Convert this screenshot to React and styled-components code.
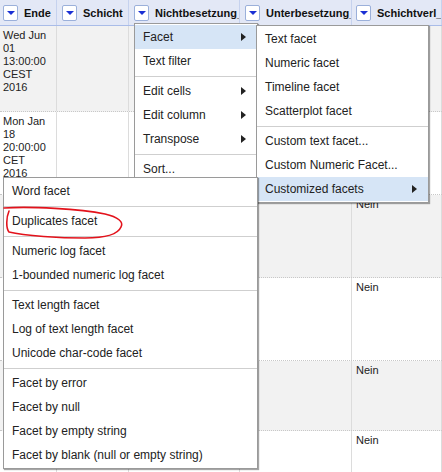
import styled, { createGlobalStyle } from "styled-components";

const GlobalStyle = createGlobalStyle`
  html, body {
    margin: 0;
    padding: 0;
    background: #fff;
    overflow: hidden;
  }
  body {
    font-family: "Liberation Sans", Arial, sans-serif;
  }
  * {
    box-sizing: border-box;
  }
`;

const COLS = "57px 72px 111px 112px 1fr";

const Page = styled.div`
  position: relative;
  width: 442px;
  height: 472px;
  overflow: hidden;
`;

const HeaderRow = styled.div`
  display: grid;
  grid-template-columns: ${COLS};
  height: 26px;
  background: #e3e8f6;
  border-bottom: 1px solid #a9bce8;
`;

const HeaderCell = styled.div`
  display: flex;
  align-items: center;
  gap: 6px;
  padding-left: ${(p) => p.$inset}px;
  border-right: 1px solid #c6d2ee;
  overflow: hidden;
  white-space: nowrap;
  font-size: 11px;
  font-weight: bold;
  color: #111;
`;

const DropButton = styled.span`
  flex-shrink: 0;
  width: 15px;
  height: 16px;
  background: #fff;
  border: 1px solid #9bb0da;
  border-radius: 2px;
  display: flex;
  align-items: center;
  justify-content: center;

  &::after {
    content: "";
    border-left: 4px solid transparent;
    border-right: 4px solid transparent;
    border-top: 4px solid #1b30d4;
  }
`;

const Row = styled.div`
  display: grid;
  grid-template-columns: ${COLS};
  height: ${(p) => p.$h}px;
  background: ${(p) => (p.$shade ? "#f2f2f2" : "#fff")};
  border-bottom: 1px dotted #c8c8c8;
`;

const Cell = styled.div`
  border-right: 1px solid #dcdcdc;
  padding: 3px ${(p) => p.$pad ?? 4}px 0;
  font-size: 11px;
  line-height: 13px;
  color: #222;
  overflow: hidden;
`;

const Line = styled.div`
  white-space: nowrap;
`;

const Menu = styled.div`
  position: absolute;
  left: ${(p) => p.$left}px;
  top: ${(p) => p.$top}px;
  width: ${(p) => p.$width}px;
  z-index: ${(p) => p.$z};
  background: #fff;
  border: 1px solid #9a9a9a;
  box-shadow: 1px 1px 1px rgba(0, 0, 0, 0.35);
  padding: 1px 0;
  font-size: 12px;
  color: #222;
`;

const Item = styled.div`
  height: 24px;
  display: flex;
  align-items: center;
  justify-content: space-between;
  padding: 0 11px 0 8px;
  white-space: nowrap;
  background: ${(p) => (p.$active ? "#d6e5f6" : "transparent")};
`;

const Arrow = styled.span`
  border-left: 5px solid #222;
  border-top: 4px solid transparent;
  border-bottom: 4px solid transparent;
`;

const Separator = styled.div`
  height: 1px;
  margin: 3px 0 2px;
  background: #cfcfcf;
`;

const Scribble = styled.svg`
  position: absolute;
  left: 0;
  top: 200px;
  z-index: 10;
  pointer-events: none;
`;

const headers = [
  { name: "Ende", inset: 3 },
  { name: "Schicht", inset: 5 },
  { name: "Nichtbesetzung_h", inset: 5 },
  { name: "Unterbesetzung_h", inset: 5 },
  { name: "Schichtverl_h", inset: 4 },
];

// rows further down sit behind the open menus, so only what shows is filled in
const rows = [
  { h: 86, date: ["Wed Jun", "01", "13:00:00", "CEST", "2016"] },
  { h: 83, date: ["Mon Jan", "18", "20:00:00", "CET", "2016"] },
  { h: 83, date: [], flag: "Nein" },
  { h: 83, date: [], flag: "Nein" },
  { h: 70, date: [], flag: "Nein" },
  { h: 60, date: [], flag: "Nein" },
];

const columnMenu = [
  { label: "Facet", sub: true, active: true },
  { label: "Text filter" },
  "sep",
  { label: "Edit cells", sub: true },
  { label: "Edit column", sub: true },
  { label: "Transpose", sub: true },
  "sep",
  { label: "Sort..." },
];

const facetMenu = [
  { label: "Text facet" },
  { label: "Numeric facet" },
  { label: "Timeline facet" },
  { label: "Scatterplot facet" },
  "sep",
  { label: "Custom text facet..." },
  { label: "Custom Numeric Facet..." },
  { label: "Customized facets", sub: true, active: true },
];

const customMenu = [
  { label: "Word facet" },
  "sep",
  { label: "Duplicates facet" },
  "sep",
  { label: "Numeric log facet" },
  { label: "1-bounded numeric log facet" },
  "sep",
  { label: "Text length facet" },
  { label: "Log of text length facet" },
  { label: "Unicode char-code facet" },
  "sep",
  { label: "Facet by error" },
  { label: "Facet by null" },
  { label: "Facet by empty string" },
  { label: "Facet by blank (null or empty string)" },
];

function MenuList({ items, ...pos }) {
  return (
    <Menu {...pos}>
      {items.map((it, i) =>
        it === "sep" ? (
          <Separator key={i} />
        ) : (
          <Item key={i} $active={it.active}>
            <span>{it.label}</span>
            {it.sub && <Arrow />}
          </Item>
        )
      )}
    </Menu>
  );
}

export default function App() {
  return (
    <Page>
      <GlobalStyle />
      <HeaderRow>
        {headers.map((h) => (
          <HeaderCell key={h.name} $inset={h.inset}>
            <DropButton />
            {h.name}
          </HeaderCell>
        ))}
      </HeaderRow>
      {rows.map((r, i) => (
        <Row key={i} $h={r.h} $shade={i % 2 === 0}>
          <Cell $pad={3}>
            {r.date.map((l, j) => (
              <Line key={j}>{l}</Line>
            ))}
          </Cell>
          <Cell />
          <Cell />
          <Cell />
          <Cell>{r.flag}</Cell>
        </Row>
      ))}

      <MenuList items={columnMenu} $left={134} $top={23} $width={124} $z={2} />
      <MenuList items={facetMenu} $left={256} $top={25} $width={173} $z={3} />
      <MenuList items={customMenu} $left={3} $top={177} $width={255} $z={4} />

      <Scribble width="130" height="45" viewBox="0 0 130 45">
        <path
          d="M4 8 C30 6, 80 9, 105 14 C118 17, 124 22, 121 27 C118 34, 105 38, 85 38 C60 38, 25 36, 9 32 C6 28, 6 18, 9 11"
          fill="none"
          stroke="#e3121b"
          strokeWidth="1.6"
          strokeLinecap="round"
        />
      </Scribble>
    </Page>
  );
}
